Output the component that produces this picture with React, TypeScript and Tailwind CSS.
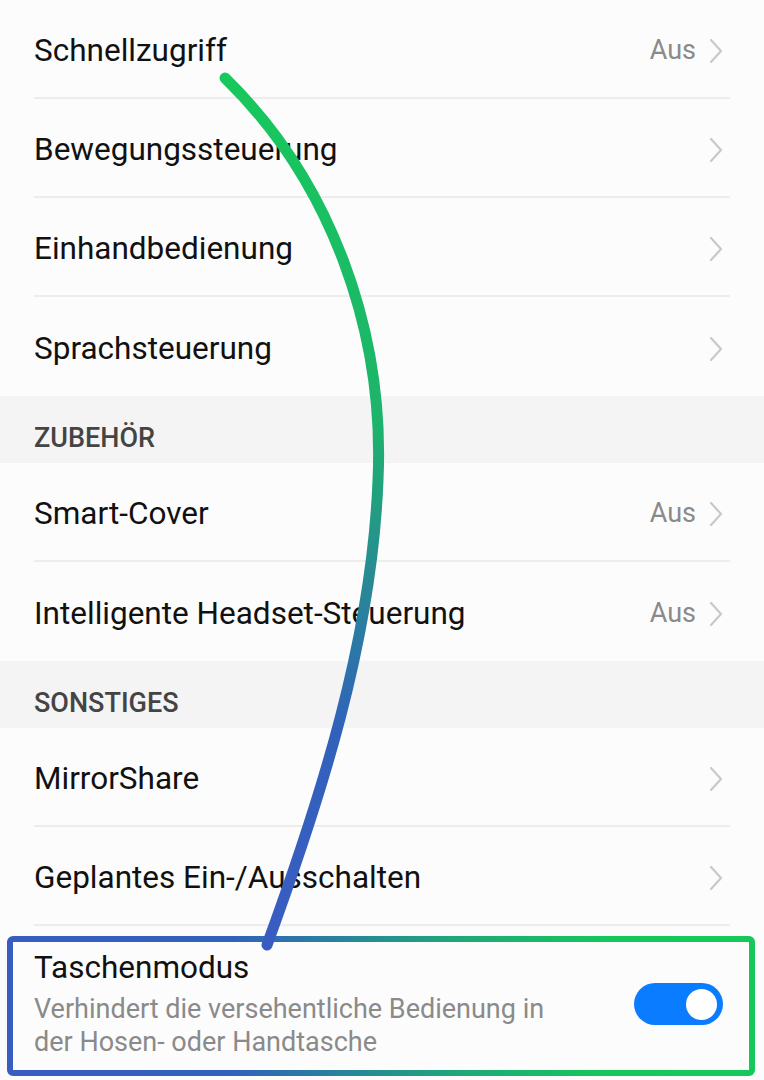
const Chevron = () => (
  <svg width="16" height="28" viewBox="0 0 16 28" fill="none" className="ml-[12px]">
    <path d="M3 3 L13 14 L3 25" stroke="#c9c9c9" strokeWidth="2.2" strokeLinecap="round" strokeLinejoin="round" />
  </svg>
);

function Row({ label, value, last }: { label: string; value?: string; last?: boolean }) {
  return (
    <div className="px-[34px]">
      <div className={`flex h-[99px] items-center justify-between pt-[4px] ${last ? "" : "border-b-2 border-[#ededed]"}`}>
        <span className="text-[31.5px] text-[#111]">{label}</span>
        <div className="flex items-center pr-[6px]">
          {value && <span className="text-[27px] text-[#8a8a8a]">{value}</span>}
          <Chevron />
        </div>
      </div>
    </div>
  );
}

function Header({ title }: { title: string }) {
  return (
    <div className="flex h-[67px] items-center bg-[#f4f4f4] px-[34px] pt-[17px]">
      <span className="text-[27px] font-medium text-[#444]">{title}</span>
    </div>
  );
}

export default function App() {
  return (
    <div className="relative h-[1080px] w-[764px] overflow-hidden bg-[#fcfcfc]" style={{ fontFamily: "Roboto, 'Noto Sans', sans-serif" }}>
      <Row label="Schnellzugriff" value="Aus" />
      <Row label="Bewegungssteuerung" />
      <Row label="Einhandbedienung" />
      <Row label="Sprachsteuerung" last />
      <Header title="ZUBEHÖR" />
      <Row label="Smart-Cover" value="Aus" />
      <Row label="Intelligente Headset-Steuerung" value="Aus" last />
      <Header title="SONSTIGES" />
      <Row label="MirrorShare" />
      <Row label="Geplantes Ein-/Ausschalten" />
      <div className="px-[34px]">
        <div className="flex items-center justify-between border-b-2 border-[#ededed] pb-[15px] pt-[23px]">
          <div>
            <div className="text-[31.5px] leading-[38px] text-[#111]">Taschenmodus</div>
            <div className="mt-[6px] max-w-[545px] text-[27px] leading-[33px] text-[#8a8a8a]">
              Verhindert die versehentliche Bedienung in der Hosen- oder Handtasche
            </div>
          </div>
          <div className="mr-[7px] flex h-[42px] w-[89px] items-center justify-end rounded-full bg-[#0a7cff] px-[6px]">
            <div className="h-[31px] w-[31px] rounded-full bg-white" />
          </div>
        </div>
      </div>

      <svg className="pointer-events-none absolute left-0 top-0" width="764" height="1080" viewBox="0 0 764 1080">
        <defs>
          <linearGradient id="curve" x1="0" y1="78" x2="0" y2="945" gradientUnits="userSpaceOnUse">
            <stop offset="0" stopColor="#17c85c" />
            <stop offset="0.4" stopColor="#1db36c" />
            <stop offset="0.75" stopColor="#3162bb" />
            <stop offset="1" stopColor="#3a5cc2" />
          </linearGradient>
          <linearGradient id="box" x1="8" y1="0" x2="754" y2="0" gradientUnits="userSpaceOnUse">
            <stop offset="0" stopColor="#3a5cc2" />
            <stop offset="0.3" stopColor="#3162bb" />
            <stop offset="0.6" stopColor="#1fa77a" />
            <stop offset="0.8" stopColor="#16c65c" />
            <stop offset="1" stopColor="#16c85a" />
          </linearGradient>
        </defs>
        <rect x="10" y="939" width="742" height="134" rx="3" fill="none" stroke="url(#box)" strokeWidth="6" />
        <path d="M225 78 C 330 180, 385 330, 378 480 C 372 640, 320 800, 267 945" fill="none" stroke="url(#curve)" strokeWidth="11" strokeLinecap="round" />
      </svg>
    </div>
  );
}
